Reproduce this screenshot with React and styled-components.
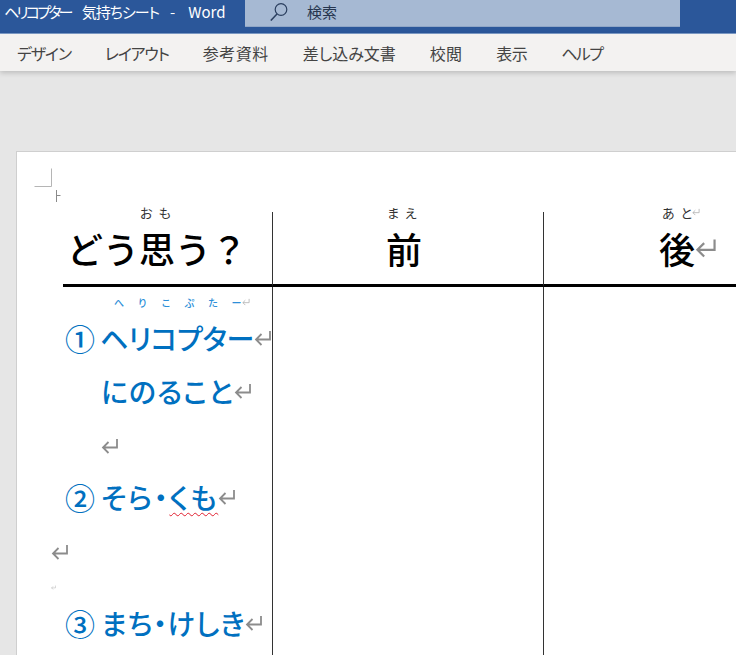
import React from "react"
import styled, { createGlobalStyle } from "styled-components"

const tabs = [
    { label: "デザイン", track: -1.2 },
    { label: "レイアウト", track: -1.2 },
    { label: "参考資料", track: 0.5 },
    { label: "差し込み文書", track: 0 },
    { label: "校閲", track: 0.2 },
    { label: "表示", track: -0.5 },
    { label: "ヘルプ", track: -1.6 },
]

const App = () => (
    <>
        <GlobalStyle />
        <Window>
            <TitleBar>
                <DocTitle>
                    <TitlePart $track={-2.8}>ヘリコプター</TitlePart>
                    <TitlePart $track={-1}>気持ちシート</TitlePart>
                    <TitlePart>-</TitlePart>
                    <TitlePart $lead={2}>Word</TitlePart>
                </DocTitle>
                <SearchBox>
                    <SearchIcon />
                    <SearchLabel>検索</SearchLabel>
                </SearchBox>
            </TitleBar>

            <Ribbon>
                {tabs.map((tab) => (
                    <Tab key={tab.label} $track={tab.track}>{tab.label}</Tab>
                ))}
            </Ribbon>

            <Canvas>
                <Page>
                    <CropMark />
                    <TextCursor />
                    <Table>
                        <HeaderCell $inset={4}>
                            <Furigana $inset={73}>おも</Furigana>
                            <HeaderWord>どう思う？</HeaderWord>
                        </HeaderCell>
                        <HeaderCell $inset={113}>
                            <Furigana $inset={1}>まえ</Furigana>
                            <HeaderWord>前</HeaderWord>
                        </HeaderCell>
                        <HeaderCell $inset={115} $last>
                            <Furigana $inset={3} $tight>
                                あと<ReturnMark $size={8} $pale />
                            </Furigana>
                            <HeaderWord>
                                後<ReturnMark $size={22} />
                            </HeaderWord>
                        </HeaderCell>

                        <BodyCell>
                            <RubyLine>
                                へりこぷた<RubyTail>ー</RubyTail>
                                <ReturnMark $size={8} $pale />
                            </RubyLine>
                            <ItemLine $height={52} $track={-0.3}>
                                <Numeral $width={43}>①</Numeral>ヘリコプター<ReturnMark $size={18} />
                            </ItemLine>
                            <ItemLine $height={54} $indent={38} $track={1}>
                                にのること<ReturnMark $size={18} />
                            </ItemLine>
                            <ItemLine $height={56} $indent={38}>
                                <ReturnMark $size={18} />
                            </ItemLine>
                            <ItemLine $height={46} $track={1.6}>
                                <Numeral>②</Numeral>そら・<Misspelled>くも</Misspelled>
                                <ReturnMark $size={18} />
                            </ItemLine>
                            <ItemLine $height={64} $indent={-12}>
                                <ReturnMark $size={18} />
                            </ItemLine>
                            <ItemLine $height={6} $indent={-12}>
                                <ReturnMark $size={5} $pale />
                            </ItemLine>
                            <ItemLine $height={66} $track={0.7}>
                                <Numeral>③</Numeral>まち・けしき<ReturnMark $size={18} />
                            </ItemLine>
                        </BodyCell>
                        <BodyCell />
                        <BodyCell $last />
                    </Table>
                </Page>
            </Canvas>
        </Window>
    </>
)

const SearchIcon = () => (
    <svg width="18" height="18" viewBox="0 0 18 18" fill="none" stroke="#2b3f5f" strokeWidth="1.2">
        <circle cx="11" cy="6.5" r="5.8" />
        <path d="M7 11 L0.8 17.6" strokeWidth="1.5" />
    </svg>
)

const CropMark = () => (
    <CropMarkSvg width="19" height="19" viewBox="0 0 19 19" fill="none" stroke="#b5b5b5">
        <path d="M0.5 18.5 H17.5 V0.5" />
    </CropMarkSvg>
)

const TextCursor = () => (
    <TextCursorSvg width="6" height="12" viewBox="0 0 6 12" fill="none" stroke="#8a8a8a">
        <path d="M0.5 0 V12 M0.5 5.5 L4.5 5.5" />
    </TextCursorSvg>
)

const ReturnMark = ({ $size, $pale }) => (
    <ReturnSvg viewBox="0 0 18 18" width={$size} height={$size} fill="none" $pale={$pale}>
        <path d="M16 2 V10.5 H2 M7.5 5 L2 10.5 L7.5 16" />
    </ReturnSvg>
)

const GlobalStyle = createGlobalStyle`
    html, body {
        margin: 0;
        padding: 0;
        background: #e6e6e6;
    }
`

const Window = styled.div`
    width: 736px;
    height: 655px;
    display: flex;
    flex-direction: column;
    overflow: hidden;
    font-family: "Noto Sans CJK JP", "Noto Sans", sans-serif;
    font-feature-settings: "palt";
`

const TitleBar = styled.div`
    height: 33px;
    flex-shrink: 0;
    display: flex;
    align-items: flex-start;
    background: #2b579a;
    border-bottom: 1px solid #7d9cc8;
    padding-left: 4px;
`

const DocTitle = styled.div`
    width: 241px;
    height: 23px;
    display: flex;
    align-items: center;
    gap: 11px;
    font-size: 15px;
    color: #fff;
    white-space: nowrap;
`

const TitlePart = styled.span`
    letter-spacing: ${(p) => p.$track ?? 0}px;
    padding-left: ${(p) => p.$lead ?? 0}px;
`

const SearchBox = styled.div`
    width: 435px;
    height: 27px;
    display: flex;
    align-items: flex-start;
    gap: 19px;
    padding: 3px 0 0 25px;
    box-sizing: border-box;
    background: #a6b9d3;
    border-bottom: 1px solid #8fa6c7;
`

const SearchLabel = styled.span`
    font-size: 15px;
    line-height: 18px;
    color: #26364f;
`

const Ribbon = styled.div`
    height: 37px;
    flex-shrink: 0;
    display: flex;
    align-items: center;
    gap: 34px;
    padding-left: 17px;
    background: #f3f2f1;
    box-shadow: 0 2px 5px rgba(0, 0, 0, 0.18);
    position: relative;
`

const Tab = styled.span`
    font-size: 16px;
    letter-spacing: ${(p) => p.$track}px;
    color: #444;
    white-space: nowrap;
`

const Canvas = styled.div`
    flex: 1;
    min-height: 0;
    padding: 80px 0 0 16px;
    background: #e6e6e6;
`

const Page = styled.div`
    height: 600px;
    position: relative;
    padding: 60px 0 0 46px;
    background: #fff;
    border-top: 1px solid #cfcfcf;
    border-left: 1px solid #cfcfcf;
`

const CropMarkSvg = styled.svg`
    position: absolute;
    left: 17px;
    top: 16px;
`

const TextCursorSvg = styled.svg`
    position: absolute;
    left: 39px;
    top: 38px;
`

const Table = styled.div`
    width: 760px;
    display: grid;
    grid-template-columns: 210px 271px 1fr;
    grid-template-rows: 75px 1fr;
`

const HeaderCell = styled.div`
    box-sizing: border-box;
    padding-left: ${(p) => p.$inset}px;
    border-bottom: 3px solid #000;
    border-right: ${(p) => (p.$last ? "none" : "1px solid #333")};
`

const Furigana = styled.div`
    height: 14px;
    margin-top: -7px;
    padding-left: ${(p) => p.$inset}px;
    display: flex;
    align-items: center;
    font-size: 13px;
    letter-spacing: 6px;
    color: #333;
    white-space: nowrap;

    svg {
        margin-left: ${(p) => (p.$tight ? "-6px" : "0")};
    }
`

const HeaderWord = styled.div`
    height: 38px;
    margin-top: 10px;
    display: flex;
    align-items: center;
    font-size: 36px;
    line-height: 38px;
    font-weight: 500;
    color: #000;
    white-space: nowrap;
    font-feature-settings: normal;
`

const BodyCell = styled.div`
    height: 400px;
    border-right: ${(p) => (p.$last ? "none" : "1px solid #333")};
`

const RubyLine = styled.div`
    height: 30px;
    margin-bottom: -5px;
    display: flex;
    align-items: center;
    padding-left: 51px;
    font-size: 10px;
    font-weight: 500;
    letter-spacing: 13.5px;
    color: #2e8fd8;
    white-space: nowrap;
    font-feature-settings: normal;
`

const RubyTail = styled.span`
    letter-spacing: 0;
`

const ItemLine = styled.div`
    height: ${(p) => p.$height}px;
    display: flex;
    align-items: center;
    padding-left: ${(p) => Math.max(p.$indent ?? 2, 0)}px;
    margin-left: ${(p) => Math.min(p.$indent ?? 0, 0)}px;
    font-size: 28px;
    letter-spacing: ${(p) => p.$track ?? 0.4}px;
    font-weight: 500;
    color: #0070c0;
    white-space: nowrap;
`

const Numeral = styled.span`
    width: ${(p) => p.$width ?? 36}px;
    font-size: 30px;
    font-weight: 500;
    line-height: 1;
    letter-spacing: 0;
    font-feature-settings: normal;
`

const Misspelled = styled.span`
    text-decoration: underline wavy #e02030 1px;
    text-underline-offset: 3px;
`

const ReturnSvg = styled.svg`
    flex-shrink: 0;
    stroke: ${(p) => (p.$pale ? "#b0b0b0" : "#8c8c8c")};
    stroke-width: 1.8;
`

export default App
